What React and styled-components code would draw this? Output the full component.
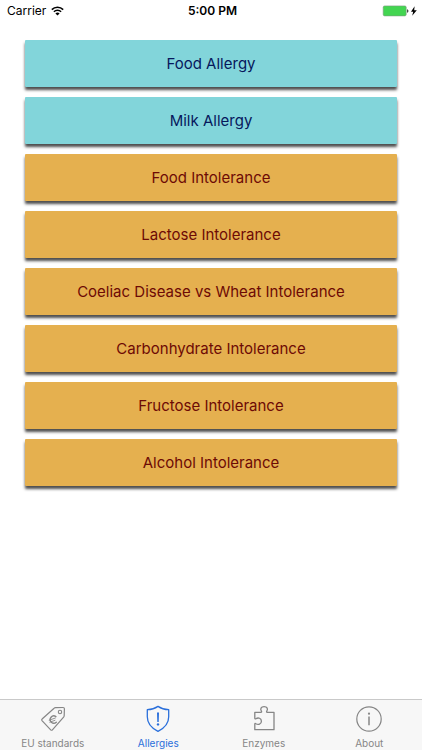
import React from 'react';
import styled, { createGlobalStyle, css } from 'styled-components';

const topics = [
  { label: 'Food Allergy', kind: 'allergy' },
  { label: 'Milk Allergy', kind: 'allergy' },
  { label: 'Food Intolerance', kind: 'intolerance' },
  { label: 'Lactose Intolerance', kind: 'intolerance' },
  { label: 'Coeliac Disease vs Wheat Intolerance', kind: 'intolerance' },
  { label: 'Carbonhydrate Intolerance', kind: 'intolerance' },
  { label: 'Fructose Intolerance', kind: 'intolerance' },
  { label: 'Alcohol Intolerance', kind: 'intolerance' },
];

const tabs = [
  { label: 'EU standards', href: '#standards', Icon: TagIcon },
  { label: 'Allergies', href: '#allergies', Icon: ShieldIcon, active: true },
  { label: 'Enzymes', href: '#enzymes', Icon: PuzzleIcon },
  { label: 'About', href: '#about', Icon: InfoIcon },
];

export default function App() {
  return (
    <Screen>
      <GlobalStyle />

      <StatusBar>
        <Carrier>
          Carrier
          <WifiIcon />
        </Carrier>
        <Time>5:00 PM</Time>
        <Power>
          <BatteryIcon />
        </Power>
      </StatusBar>

      <TopicList>
        {topics.map(({ label, kind }) => (
          <TopicButton key={label} type="button" $kind={kind}>
            {label}
          </TopicButton>
        ))}
      </TopicList>

      <TabBar>
        {tabs.map(({ label, href, Icon, active }) => (
          <Tab
            key={label}
            href={href}
            $active={active}
            aria-current={active ? 'page' : undefined}
          >
            <Icon />
            {label}
          </Tab>
        ))}
      </TabBar>
    </Screen>
  );
}

/* Icons */
function WifiIcon() {
  return (
    <svg width="13" height="10" viewBox="0 0 13 10" aria-hidden="true">
      <g fill="none" stroke="#000" strokeWidth="1.6">
        <path d="M0.8 3.6a8.1 8.1 0 0 1 11.4 0" />
        <path d="M2.9 5.8a5.1 5.1 0 0 1 7.2 0" />
      </g>
      <path d="M6.5 9.6 4.4 7.5a3 3 0 0 1 4.2 0z" />
    </svg>
  );
}

function BatteryIcon() {
  return (
    <svg width="36" height="12" viewBox="0 0 36 12" aria-hidden="true">
      <rect x="1.2" y="0.9" width="23" height="10" rx="1.4" fill="#43d551" stroke="#7d9b80" strokeWidth="0.6" />
      <path d="M25.2 4.2c1.6.3 1.6 3.2 0 3.5z" fill="#222" />
      <path d="M32.6 1.2 29 6.7h2.2L30.2 10.8 34.8 5.2h-2.6z" fill="#000" />
    </svg>
  );
}

function TagIcon() {
  return (
    <svg width="28" height="28" viewBox="0 0 28 28" aria-hidden="true">
      <g fill="none" stroke="currentColor" strokeLinejoin="round" strokeLinecap="round">
        <path
          d="M15.1 3.2c.4-.4.8-.6 1.4-.6l7.6-.1c.9 0 1.3.4 1.3 1.2l-.2 6.9c0 .6-.2 1-.6 1.5L13.4 24.8c-.5.6-1.1.6-1.7.1L3 15.6c-.5-.6-.5-1.1.1-1.6z"
          strokeWidth="1.2"
        />
        <circle cx="21" cy="7" r="1.7" strokeWidth="1.1" />
        <path d="M16.9 11.6a3.6 3.6 0 1 0 .4 5.6" strokeWidth="1.4" />
        <path d="M10.2 15.2 16.4 13M10.8 17.2l5.2-1.9" strokeWidth="0.9" />
      </g>
    </svg>
  );
}

function ShieldIcon() {
  return (
    <svg width="28" height="28" viewBox="0 0 28 28" aria-hidden="true">
      <path
        d="M14 1.4c-3.2 2.2-6.7 3.2-10.7 3.3v7.1c0 6.4 4 11.3 10.7 14.5 6.7-3.2 10.7-8.1 10.7-14.5V4.7C20.7 4.6 17.2 3.6 14 1.4z"
        fill="none"
        stroke="currentColor"
        strokeWidth="1.3"
        strokeLinejoin="round"
      />
      <path d="M13 7.4h2l-.3 9.6h-1.4z" fill="currentColor" />
      <circle cx="14" cy="19.4" r="1.2" fill="currentColor" />
    </svg>
  );
}

function PuzzleIcon() {
  return (
    <svg width="28" height="28" viewBox="0 0 28 28" aria-hidden="true">
      <path
        d="M4.8 7.3h6.1c.8 0 .9-.5.5-1.1-1.4-2.1-.5-4.5 2.7-4.5s4.1 2.4 2.7 4.5c-.4.6-.3 1.1.5 1.1H24v17.4H4.8v-5.6c0-.7.5-.8 1.1-.4 2.4 1.5 5.5.5 5.5-2.5s-3.1-4-5.5-2.5c-.6.4-1.1.3-1.1-.4z"
        fill="none"
        stroke="currentColor"
        strokeWidth="1.3"
        strokeLinejoin="round"
      />
    </svg>
  );
}

function InfoIcon() {
  return (
    <svg width="28" height="28" viewBox="0 0 28 28" aria-hidden="true">
      <circle cx="14" cy="14" r="12.2" fill="none" stroke="currentColor" strokeWidth="1.2" />
      <circle cx="14" cy="8.7" r="1.1" fill="currentColor" />
      <path d="M14 11.4v8.8" stroke="currentColor" strokeWidth="1.5" />
    </svg>
  );
}

const GlobalStyle = createGlobalStyle`
  * {
    box-sizing: border-box;
  }

  body {
    margin: 0;
    background: #fff;
    font-family: Inter, 'Liberation Sans', sans-serif;
  }
`;

const Screen = styled.div`
  display: flex;
  flex-direction: column;
  min-height: 100vh;
`;

const StatusBar = styled.header`
  display: grid;
  grid-template-columns: 1fr auto 1fr;
  align-items: center;
  height: 22px;
  padding: 0 4px 0 7px;
  font-size: 12px;
  line-height: 22px;
  color: #000;
`;

const Carrier = styled.div`
  display: flex;
  align-items: center;
  gap: 5px;
`;

const Time = styled.time`
  font-weight: 600;
`;

const Power = styled.div`
  display: flex;
  justify-content: flex-end;
`;

const TopicList = styled.main`
  display: flex;
  flex: 1;
  flex-direction: column;
  gap: 10px;
  padding: 18px 25px;
`;

const TopicButton = styled.button`
  height: 47px;
  padding: 0;
  border: 0;
  border-radius: 1px;
  font-family: inherit;
  font-size: 15px;
  line-height: 20px;
  box-shadow: 0 3px 3px rgba(0, 0, 0, 0.7);
  cursor: pointer;

  ${props => props.$kind === 'allergy' && css`
    background: #82d5da;
    color: #06185c;
  `}

  ${props => props.$kind === 'intolerance' && css`
    background: #e5b04f;
    color: #6d0a05;
  `}
`;

const TabBar = styled.nav`
  display: flex;
  height: 51px;
  border-top: 1px solid #c9c9c9;
  background: #f7f7f7;
`;

const Tab = styled.a`
  display: flex;
  flex: 1;
  flex-direction: column;
  align-items: center;
  gap: 4px;
  padding-top: 5px;
  font-size: 10px;
  line-height: 12px;
  text-decoration: none;
  color: ${props => (props.$active ? '#2a6fdb' : '#868686')};
`;
